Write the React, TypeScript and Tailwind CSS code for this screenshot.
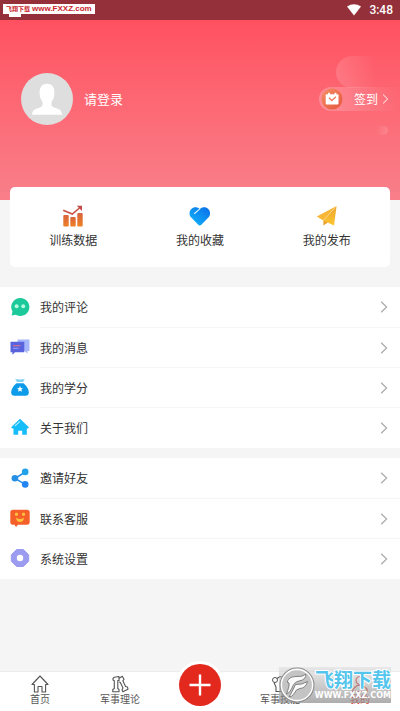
import type { ReactNode } from "react";

type Item = { label: string; icon: ReactNode };

const Chevron = ({ className }: { className?: string }) => (
  <svg viewBox="0 0 8 12" fill="none" stroke="currentColor" className={className} aria-hidden="true">
    <path d="M1.2 0.8L6.6 6L1.2 11.2" strokeWidth="1.2" />
  </svg>
);

const ChartIcon = () => (
  <svg viewBox="0 0 22 22" className="size-[22px]" aria-hidden="true">
    <defs>
      <linearGradient id="chart" x1="0" y1="0" x2="0" y2="1">
        <stop offset="0" stopColor="#d8643c" />
        <stop offset="1" stopColor="#ef8127" />
      </linearGradient>
    </defs>
    <rect x="1.3" y="10" width="5.4" height="11.5" rx="1" fill="url(#chart)" />
    <rect x="8.3" y="12" width="5.400" height="9.5" rx="1" fill="url(#chart)" />
    <rect x="15.3" y="8" width="5.400" height="13.5" rx="1" fill="url(#chart)" />
    <path d="M1.2 5.2L10.3 9L17.5 3" fill="none" stroke="#c95145" strokeWidth="1.6" />
    <path d="M14.8 0.8H20V6Z" fill="#c44848" />
  </svg>
);

const HeartIcon = () => (
  <svg viewBox="0 0 22 22" className="size-[22px]" aria-hidden="true">
    <defs>
      <linearGradient id="heart" x1="0" y1="1" x2="1" y2="0">
        <stop offset="0" stopColor="#12b9fb" />
        <stop offset="1" stopColor="#0a6ce8" />
      </linearGradient>
    </defs>
    <path d="M10.8 20.5Q9.9 20.4 9 19.5L2 12.3C0 10 0 6.2 2.3 3.9C4.7 1.6 8.3 1.7 10.8 4.1C13.3 1.7 17 1.6 19.3 3.9C21.6 6.2 21.6 10 19.6 12.3L12.6 19.5Q11.7 20.4 10.8 20.5Z" fill="url(#heart)" />
    <path d="M5.5 8.5L10.8 3.8" stroke="#d8f3ff" strokeWidth="1.1" strokeLinecap="round" />
  </svg>
);

const PlaneIcon = () => (
  <svg viewBox="0 0 22 22" className="size-[22px]" aria-hidden="true">
    <defs>
      <linearGradient id="plane" x1="0" y1="0" x2="0" y2="1">
        <stop offset="0" stopColor="#efa431" />
        <stop offset="1" stopColor="#fbc52f" />
      </linearGradient>
    </defs>
    <path d="M20.6 0.9L0.8 11.5L7.4 15.6Z" fill="#f8b634" />
    <path d="M20.6 0.9L7.4 15.4L18 20.6Z" fill="url(#plane)" />
    <path d="M7.4 15.2V20.4L12 17.5Z" fill="#eda22e" />
    <path d="M18.5 3.3L7.4 15.2" stroke="#fde3a2" strokeWidth="0.5" />
  </svg>
);

const CommentIcon = () => (
  <svg viewBox="0 0 20 20" className="size-5" aria-hidden="true">
    <path d="M10.3 1A9 9 0 1 1 5.7 17.7L1.6 18.6L2.5 14.5A9 9 0 0 1 10.3 1Z" fill="#1cc99a" />
    <circle cx="6.6" cy="9.2" r="2" fill="#b6fbe0" />
    <circle cx="13.2" cy="9.2" r="2" fill="#b6fbe0" />
  </svg>
);

const MessageIcon = () => (
  <svg viewBox="0 0 20 20" className="size-5" aria-hidden="true">
    <path d="M7.5 2.5H19.5V14H17.5V16.500L14.5 14H7.5Z" fill="#a6b6fb" />
    <path d="M0.5 4.8H14.3V15.3H5L2.4 17.8V15.3H0.5Z" fill="#5963dd" />
    <path d="M3 8.7H10.5" stroke="#d4738f" strokeWidth="1.2" />
    <path d="M3 11.4H8.5" stroke="#8d98f5" strokeWidth="1.2" />
  </svg>
);

const BagIcon = () => (
  <svg viewBox="0 0 20 20" className="size-5" aria-hidden="true">
    <path d="M5 1.6Q6.8 2.7 8 1.9Q10 3 12 1.9Q13.5 2.7 15 1.6L13 5H7Z" fill="#7fd2f6" />
    <path d="M6.5 6.2H13.5C16.5 8.5 18.8 12 18.8 15.2Q18.8 18.7 15.5 18.7H4.5Q1.2 18.7 1.2 15.2C1.2 12 3.5 8.5 6.5 6.2Z" fill="#0e9bea" />
    <path d="M10 9L10.9 11L13 11.2L11.4 12.6L11.9 14.8L10 13.7L8.1 14.8L8.6 12.6L7 11.2L9.1 11Z" fill="#fff" />
  </svg>
);

const HouseIcon = () => (
  <svg viewBox="0 0 20 20" className="size-5" aria-hidden="true">
    <path d="M10 1.8L18.9 10.2Q18.6 11.6 16.8 11.4V17.8H12.2V13.8H8.2V17.8H3.5V11.4Q1.5 11.6 1.2 10.2Z" fill="#16bdfb" />
    <path d="M5.3 8.7L9.6 4.8" stroke="#b5edff" strokeWidth="1.1" strokeLinecap="round" />
  </svg>
);

const ShareIcon = () => (
  <svg viewBox="0 0 20 20" className="size-5" aria-hidden="true">
    <path d="M15.2 4L5 10.5L15.2 16.3" fill="none" stroke="#278fe8" strokeWidth="1.5" />
    <circle cx="15.2" cy="3.9" r="3.3" fill="#20a3ea" />
    <circle cx="4.9" cy="10.3" r="3.3" fill="#268fe6" />
    <circle cx="15.2" cy="16.4" r="3.3" fill="#2385f2" />
  </svg>
);

const ServiceIcon = () => (
  <svg viewBox="0 0 20 20" className="size-5" aria-hidden="true">
    <path d="M3 1.7H17Q19.7 1.7 19.7 4.5V14Q19.7 16.7 17 16.7H8L6 19L4.5 16.7H3Q0.3 16.7 0.3 14V4.5Q0.3 1.7 3 1.7Z" fill="#f5602a" />
    <rect x="5" y="4.8" width="3" height="3" rx="1" fill="#ffc23c" />
    <rect x="12" y="4.8" width="3" height="3" rx="1" fill="#ffc23c" />
    <path d="M6 9.5Q8 11 10 11T14 9.500Q13.5 14 10 14Q6.500 14 6 9.500Z" fill="#ffc23c" />
  </svg>
);

const SettingIcon = () => (
  <svg viewBox="0 0 20 20" className="size-5" aria-hidden="true">
    <path d="M6.7 1.5H13.3L18.7 6.8V13.2L13.3 18.5H6.7L1.3 13.2V6.8Z" fill="#9b9bf0" stroke="#9b9bf0" strokeLinejoin="round" />
    <circle cx="10" cy="10" r="3.2" fill="#fff" />
  </svg>
);

const HomeOutline = () => (
  <svg viewBox="0 0 18 18" fill="none" stroke="#555" strokeLinejoin="round" className="size-[18px]" aria-hidden="true">
    <path d="M1 9.5L9 1L17 9.5H14.6V17H11V11.5H7V17H3.4V9.5Z" strokeWidth="1.1" />
  </svg>
);

const TheoryOutline = () => (
  <svg viewBox="0 0 18 18" fill="none" stroke="#555" strokeLinejoin="round" className="size-[18px]" aria-hidden="true">
    <path d="M3.3 2.2L8 1.5V5.5H6.8V13.5L8 14.5V16.8H1.8V14.5L3.3 13.5V5.8L2 5V3.5Z" strokeWidth="1.1" />
    <path d="M8 3.2L11.3 1.3L13 4.3L11.8 5.8L14.6 11.5L16.5 12L17 14.2L11.8 16.8L11 14.8L12 13L9.2 7.2L8 7" strokeWidth="1.1" />
  </svg>
);

const SkillOutline = () => (
  <svg viewBox="0 0 18 18" fill="none" stroke="#555" className="size-[18px]" aria-hidden="true">
    <circle cx="4" cy="5" r="2.5" />
    <path d="M6 3.5L9 1.5L14 3V16.5H5V12L3 7.5" strokeWidth="1.1" />
  </svg>
);

const MineOutline = () => (
  <svg viewBox="0 0 18 18" fill="none" stroke="#dc4238" className="size-[18px]" aria-hidden="true">
    <circle cx="9" cy="5.5" r="4" strokeWidth="1.2" />
    <path d="M2 16.5V14L6 10.5H12L16 14V16.5Z" strokeWidth="1.2" />
  </svg>
);

const shortcuts: Item[] = [
  { label: "训练数据", icon: <ChartIcon /> },
  { label: "我的收藏", icon: <HeartIcon /> },
  { label: "我的发布", icon: <PlaneIcon /> },
];

const personal: Item[] = [
  { label: "我的评论", icon: <CommentIcon /> },
  { label: "我的消息", icon: <MessageIcon /> },
  { label: "我的学分", icon: <BagIcon /> },
  { label: "关于我们", icon: <HouseIcon /> },
];

const support: Item[] = [
  { label: "邀请好友", icon: <ShareIcon /> },
  { label: "联系客服", icon: <ServiceIcon /> },
  { label: "系统设置", icon: <SettingIcon /> },
];

function MenuList({ items }: { items: Item[] }) {
  return (
    <ul className="bg-white pb-px">
      {items.map((item, i) => (
        <li key={item.label}>
          <a href="#" className="flex h-10 items-center pl-[10px]">
            {item.icon}
            <span
              className={
                i > 0
                  ? "ml-[10px] flex h-full flex-1 items-center justify-between border-t border-[#f6f6f6] pr-3"
                  : "ml-[10px] flex h-full flex-1 items-center justify-between pr-3"
              }
            >
              <span className="text-[12px] leading-4 text-[#333]">{item.label}</span>
              <Chevron className="h-3 w-2 text-[#aaa]" />
            </span>
          </a>
        </li>
      ))}
    </ul>
  );
}

function Tab({ label, icon, active }: Item & { active?: boolean }) {
  return (
    <a href="#" className="flex flex-1 flex-col items-center pt-[3px]">
      {icon}
      <span className={active ? "text-[10px] leading-3 text-[#dc4238]" : "text-[10px] leading-3 text-[#555]"}>
        {label}
      </span>
    </a>
  );
}

function SiteBadge() {
  return (
    <div className="absolute right-[9px] bottom-2 flex h-9 items-center bg-gradient-to-b from-[#d4d4d4]/40 to-[#8a8a8a]/70">
      <svg viewBox="0 0 36 36" className="size-9 shrink-0" aria-hidden="true">
        <circle cx="18" cy="18" r="16.2" fill="#c4c4c4" stroke="#8c8c8c" strokeWidth="2.6" />
        <circle cx="18" cy="18" r="15.6" fill="none" stroke="#fff" strokeWidth="1.6" />
        <path d="M8 15Q10 9.500 17 9.500Q24 10 27 7Q27 13 20 14Q15 15 13 21Q11 26 7.500 27Q9 23 10 19Q11 15 8 15Z" fill="#fafafa" stroke="#777" strokeWidth="0.9" />
        <path d="M16.500 17.500Q23 18 28.500 14.500Q27 21 21 21.500Q17 22 15.500 26Q13.500 30 10 30Q13 25 16.500 17.500Z" fill="#fafafa" stroke="#777" strokeWidth="0.9" />
      </svg>
      <div className="flex flex-col items-center">
        <span className="text-[19px] leading-[22px] font-bold text-[#55c5ed] [paint-order:stroke_fill] [-webkit-text-stroke:2px_#fff]">
          飞翔下载
        </span>
        <span className="font-['DejaVu_Sans','Noto_Sans_CJK_SC',sans-serif] text-[8px] leading-3 font-bold text-white">
          WWW.FXXZ.COM
        </span>
      </div>
    </div>
  );
}

export default function App() {
  return (
    <div className="relative flex min-h-screen flex-col bg-[#f5f5f5] font-['Noto_Sans_CJK_SC',sans-serif]">
      <div className="flex h-5 items-center justify-end gap-2 bg-[#943039] pr-[7px] text-white">
        <svg viewBox="0 0 14 12" className="h-3 w-[14px]" fill="currentColor" aria-hidden="true">
          <path d="M0 2.5Q7 -1.8 14 2.5L7 11.5Z" />
        </svg>
        <span className="font-['Roboto',sans-serif] text-[12px] leading-4 font-medium">3:48</span>
      </div>
      <div className="absolute top-3 left-[9px] h-[5px] w-3 bg-white" />
      <div className="absolute top-1 left-[3px] flex h-[10px] items-center gap-[2px] bg-white px-[3px] font-bold text-[#c8242c]">
        <span className="text-[6px] leading-none">飞翔下载</span>
        <span className="font-['Liberation_Sans',sans-serif] text-[8px] leading-none">www.FXXZ.com</span>
      </div>

      <header className="relative h-[180px] bg-gradient-to-b from-[#ff5060] to-[#f87f8a]">
        <div className="absolute top-9 right-6 h-8 w-10 rounded-l-full bg-gradient-to-r from-white/15 to-white/0" />
        <div className="absolute top-[106px] right-3 h-[9px] w-3 rounded-r-full bg-gradient-to-l from-white/15 to-white/0" />
        <div className="flex items-center justify-between pt-[53px] pl-[21px]">
          <button className="flex items-center gap-[11px] text-[13px] leading-5 text-white">
            <svg viewBox="0 0 52 52" className="size-[52px]" aria-hidden="true">
              <circle cx="26" cy="26" r="26" fill="#dedede" />
              <path d="M18.5 20Q18.5 10.7 26 10.7T33.5 20Q33.5 25 30.5 29V32.5Q31 34.2 36 35.5Q41 37 41 41.7H11Q11 37 16 35.5Q21 34.2 21.5 32.5V29Q18.5 25 18.5 20Z" fill="#fff" />
            </svg>
            请登录
          </button>
          <button className="flex h-6 items-center rounded-l-full bg-gradient-to-r from-white/25 to-white/0 pr-[11px] pl-[2px] text-[12px] leading-4 text-white">
            <svg viewBox="0 0 22 22" className="mr-[11px] size-[22px]" aria-hidden="true">
              <defs>
                <linearGradient id="sign" x1="0" y1="0" x2="1" y2="1">
                  <stop offset="0" stopColor="#f58e64" />
                  <stop offset="1" stopColor="#e6553f" />
                </linearGradient>
              </defs>
              <circle cx="11" cy="11" r="10.5" fill="url(#sign)" />
              <rect x="4.7" y="6.2" width="12.8" height="10.300" rx="1" fill="#fff" />
              <path d="M8 4.800V7.500M14.5 4.800V7.500" stroke="#fff" strokeWidth="1.8" />
              <path d="M8 9.800L10.800 12.500L15 8.800" fill="none" stroke="#ef765b" strokeWidth="1.3" />
            </svg>
            签到
            <Chevron className="ml-1 h-[10px] w-[7px]" />
          </button>
        </div>
      </header>

      <main className="flex-1">
        <nav className="relative mx-[10px] -mt-[13px] flex h-20 rounded-[5px] bg-white">
          {shortcuts.map((item) => (
            <a
              key={item.label}
              href="#"
              className="flex flex-1 flex-col items-center gap-1 pt-[18px] text-[12px] leading-[18px] text-[#333]"
            >
              {item.icon}
              {item.label}
            </a>
          ))}
        </nav>
        <div className="mt-5 flex flex-col gap-[10px]">
          <MenuList items={personal} />
          <MenuList items={support} />
        </div>
      </main>

      <nav className="relative flex h-10 border-t border-[#ececec] bg-white">
        <Tab label="首页" icon={<HomeOutline />} />
        <Tab label="军事理论" icon={<TheoryOutline />} />
        <div className="flex flex-1 justify-center">
          <button aria-label="发布" className="-mt-[11px] size-12 rounded-full bg-white p-[3px]">
            <svg viewBox="0 0 42 42" className="size-full" aria-hidden="true">
              <circle cx="21" cy="21" r="21" fill="#e3291e" />
              <path d="M21 10.5V31.5M10.5 21H31.5" stroke="#fff" strokeWidth="2.4" />
            </svg>
          </button>
        </div>
        <Tab label="军事技能" icon={<SkillOutline />} />
        <Tab label="我的" icon={<MineOutline />} active />
        <SiteBadge />
      </nav>
    </div>
  );
}
